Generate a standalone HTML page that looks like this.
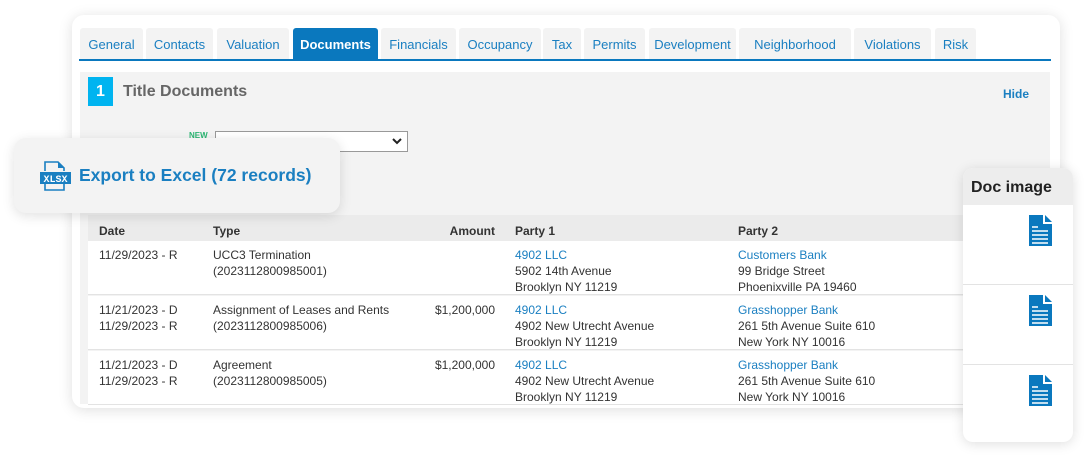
<!DOCTYPE html>
<html><head><meta charset="utf-8">
<style>
*{margin:0;padding:0;box-sizing:border-box}
body{width:1089px;height:458px;background:#fff;font-family:"Liberation Sans",sans-serif;position:relative;overflow:hidden;color:#333}
.card{position:absolute;left:72px;top:15px;width:988px;height:393px;background:#fff;border-radius:12px;box-shadow:0 2px 14px rgba(0,0,0,.13)}
.tab{position:absolute;top:28px;height:31px;background:#f3f3f3;color:#1a7fc1;font-size:13px;line-height:33px;text-align:center;border-radius:3px 3px 0 0}
.tab.a{background:#0a78be;color:#fff;font-weight:bold}
.line{position:absolute;left:79px;top:59px;width:972px;height:2px;background:#0a78be}
.gray{position:absolute;left:80px;top:72px;width:970px;height:332px;background:#f3f3f3}
.badge{position:absolute;left:88px;top:77px;width:25px;height:29px;background:#00b4f0;color:#fff;font-weight:bold;font-size:16px;text-align:center;line-height:29px}
.title{position:absolute;left:123px;top:83px;font-size:16px;font-weight:bold;color:#666}
.hide{position:absolute;left:1003px;top:87px;font-size:12px;font-weight:bold;color:#1a7fc1}
.new{position:absolute;left:189px;top:131px;font-size:8px;font-weight:bold;color:#2bb673}
.sel{position:absolute;left:215px;top:131px;width:193px;height:21px;background:#fff;border:1px solid #999}
.thead{position:absolute;left:88px;top:215px;width:880px;height:26px;background:#ebebeb}
.row{position:absolute;left:88px;width:880px;height:54px;background:#fff;border-bottom:1px solid #e3e3e3}
.c{position:absolute;font-size:12px;line-height:16px;color:#333;white-space:nowrap}
.h{font-weight:bold;top:8px}
.l{color:#1a7fc1}
.exp{position:absolute;left:14px;top:138px;width:326px;height:75px;background:#f3f3f3;border-radius:12px;box-shadow:0 3px 12px rgba(0,0,0,.12)}
.exp span{position:absolute;left:65px;top:27px;font-size:17.5px;font-weight:bold;color:#1a7fc1}
.doc{position:absolute;left:963px;top:168px;width:110px;height:274px;background:#fff;border-radius:10px;box-shadow:0 2px 12px rgba(0,0,0,.13);overflow:hidden}
.doc .hd{height:37px;background:#ededed;font-size:16px;font-weight:bold;color:#222;padding:11px 0 0 8px}
.dr{height:80px;border-bottom:1px solid #e3e3e3;position:relative}
.dr svg{position:absolute;left:66px;top:10px}
</style></head><body>
<div class="card"></div>
<div class="tab" style="left:80px;width:63px">General</div>
<div class="tab" style="left:146px;width:67px">Contacts</div>
<div class="tab" style="left:217px;width:72px">Valuation</div>
<div class="tab a" style="left:293px;width:85px">Documents</div>
<div class="tab" style="left:381px;width:75px">Financials</div>
<div class="tab" style="left:459px;width:82px">Occupancy</div>
<div class="tab" style="left:543px;width:38px">Tax</div>
<div class="tab" style="left:584px;width:61px">Permits</div>
<div class="tab" style="left:649px;width:87px">Development</div>
<div class="tab" style="left:739px;width:112px">Neighborhood</div>
<div class="tab" style="left:854px;width:77px">Violations</div>
<div class="tab" style="left:935px;width:41px">Risk</div>
<div class="line"></div>
<div class="gray"></div>
<div class="badge">1</div>
<div class="title">Title Documents</div>
<div class="hide">Hide</div>
<div class="new">NEW</div>
<div class="sel"><svg style="position:absolute;right:5px;top:6px" width="10" height="7" viewBox="0 0 10 7"><path d="M1 1l4 4 4-4" stroke="#222" stroke-width="2" fill="none"/></svg></div>
<div class="thead">
<div class="c h" style="left:11px">Date</div>
<div class="c h" style="left:125px">Type</div>
<div class="c h" style="right:473px">Amount</div>
<div class="c h" style="left:427px">Party 1</div>
<div class="c h" style="left:650px">Party 2</div>
</div>
<div class="row" style="top:241px">
<div class="c" style="left:11px;top:6px">11/29/2023 - R</div>
<div class="c" style="left:125px;top:6px">UCC3 Termination<br>(2023112800985001)</div>
<div class="c" style="left:427px;top:6px"><span class="l">4902 LLC</span><br>5902 14th Avenue<br>Brooklyn NY 11219</div>
<div class="c" style="left:650px;top:6px"><span class="l">Customers Bank</span><br>99 Bridge Street<br>Phoenixville PA 19460</div>
</div>
<div class="row" style="top:296px">
<div class="c" style="left:11px;top:6px">11/21/2023 - D<br>11/29/2023 - R</div>
<div class="c" style="left:125px;top:6px">Assignment of Leases and Rents<br>(2023112800985006)</div>
<div class="c" style="right:473px;top:6px">$1,200,000</div>
<div class="c" style="left:427px;top:6px"><span class="l">4902 LLC</span><br>4902 New Utrecht Avenue<br>Brooklyn NY 11219</div>
<div class="c" style="left:650px;top:6px"><span class="l">Grasshopper Bank</span><br>261 5th Avenue Suite 610<br>New York NY 10016</div>
</div>
<div class="row" style="top:351px">
<div class="c" style="left:11px;top:6px">11/21/2023 - D<br>11/29/2023 - R</div>
<div class="c" style="left:125px;top:6px">Agreement<br>(2023112800985005)</div>
<div class="c" style="right:473px;top:6px">$1,200,000</div>
<div class="c" style="left:427px;top:6px"><span class="l">4902 LLC</span><br>4902 New Utrecht Avenue<br>Brooklyn NY 11219</div>
<div class="c" style="left:650px;top:6px"><span class="l">Grasshopper Bank</span><br>261 5th Avenue Suite 610<br>New York NY 10016</div>
</div>
<div class="exp">
<svg style="position:absolute;left:25px;top:22px" width="33" height="32" viewBox="0 0 33 32">
<path d="M6 11V2h13l6 6v3M6 24v6h19v-6" fill="none" stroke="#1a7fc1" stroke-width="1.6"/>
<path d="M19 2v6h6z" fill="#1a7fc1"/>
<rect x="1" y="12" width="31" height="12" fill="#1a7fc1"/>
<text x="16.5" y="22" font-family="Liberation Mono,monospace" font-weight="bold" font-size="10" fill="#fff" text-anchor="middle">XLSX</text>
</svg>
<span>Export to Excel (72 records)</span>
</div>
<div class="doc">
<div class="hd">Doc image</div>
<div class="dr"><svg width="23" height="31" viewBox="0 0 23 31"><path d="M0 0h14v9h9v22H0z" fill="#0a78be"/><path d="M16 0l7 7h-7z" fill="#0a78be"/><path d="M3 12h6M3 16h16M3 20h16M3 24h16M3 28h16" stroke="#fff" stroke-width="1.4"/></svg></div>
<div class="dr"><svg width="23" height="31" viewBox="0 0 23 31"><path d="M0 0h14v9h9v22H0z" fill="#0a78be"/><path d="M16 0l7 7h-7z" fill="#0a78be"/><path d="M3 12h6M3 16h16M3 20h16M3 24h16M3 28h16" stroke="#fff" stroke-width="1.4"/></svg></div>
<div class="dr" style="border:0"><svg width="23" height="31" viewBox="0 0 23 31"><path d="M0 0h14v9h9v22H0z" fill="#0a78be"/><path d="M16 0l7 7h-7z" fill="#0a78be"/><path d="M3 12h6M3 16h16M3 20h16M3 24h16M3 28h16" stroke="#fff" stroke-width="1.4"/></svg></div>
</div>
</body></html>
